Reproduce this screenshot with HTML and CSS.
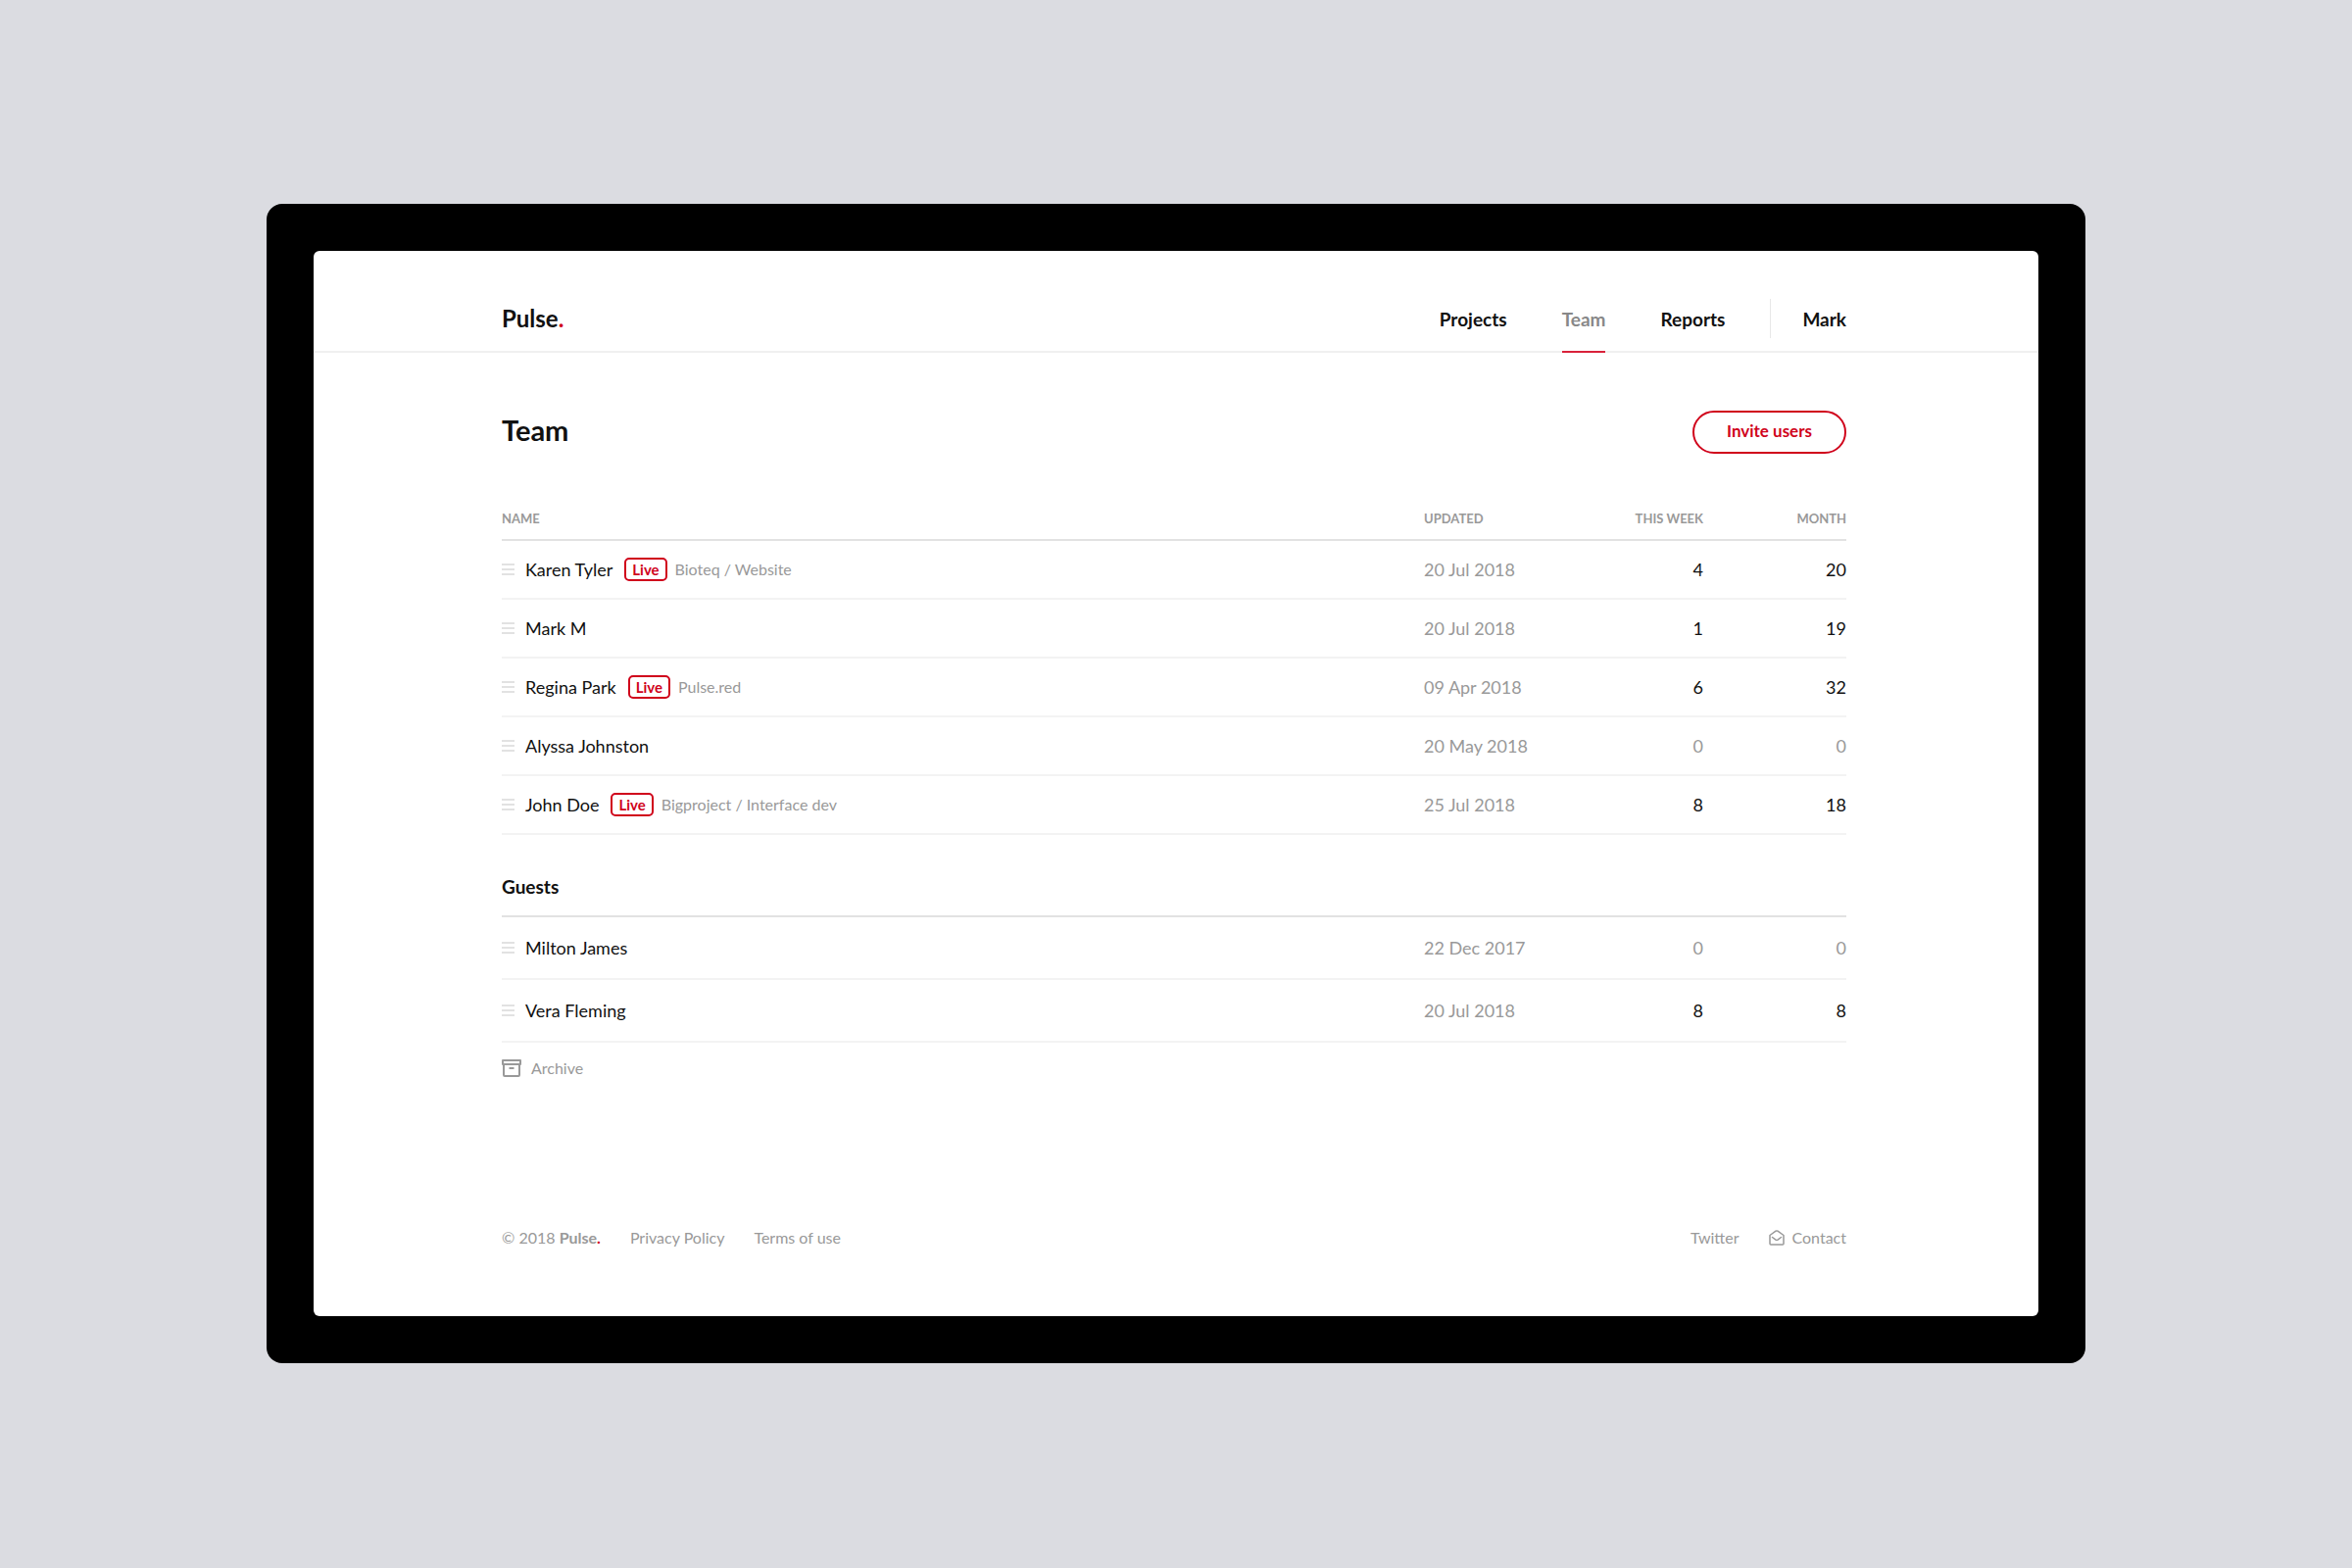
FILE: index.html
```html
<!DOCTYPE html>
<html lang="en">
<head>
  <meta charset="UTF-8">
  <title>Pulse. Team</title>
  <meta name="viewport" content="width=device-width, initial-scale=1">
  <link rel="stylesheet" href="styles.css">
</head>
<body>

<svg width="0" height="0" class="sprite" aria-hidden="true">
  <symbol id="drag" viewBox="0 0 13 12">
    <path d="M0 1h13M0 6h13M0 11h13" fill="none" stroke="currentColor" stroke-width="2"/>
  </symbol>
</svg>

<div class="device">
  <div class="screen">

    <header class="header">
      <a class="logo" href="#">Pulse<span class="dot">.</span></a>
      <nav class="nav">
        <a href="#">Projects</a>
        <a href="#" class="active">Team</a>
        <a href="#">Reports</a>
        <a href="#" class="user">Mark</a>
      </nav>
    </header>

    <main class="content">
      <div class="title-row">
        <h1>Team</h1>
        <button class="btn" type="button">Invite users</button>
      </div>

      <table class="team">
        <thead>
          <tr>
            <th scope="col">NAME</th>
            <th scope="col" class="updated">UPDATED</th>
            <th scope="col" class="week">THIS WEEK</th>
            <th scope="col" class="month">MONTH</th>
          </tr>
        </thead>
        <tbody>
          <tr>
            <td><div class="person"><button class="drag" type="button" aria-label="Move Karen Tyler"><svg><use href="#drag"/></svg></button><span class="name">Karen Tyler</span><span class="live">Live</span><span class="project">Bioteq / Website</span></div></td>
            <td class="updated">20 Jul 2018</td>
            <td class="week">4</td>
            <td class="month">20</td>
          </tr>
          <tr>
            <td><div class="person"><button class="drag" type="button" aria-label="Move Mark M"><svg><use href="#drag"/></svg></button><span class="name">Mark M</span></div></td>
            <td class="updated">20 Jul 2018</td>
            <td class="week">1</td>
            <td class="month">19</td>
          </tr>
          <tr>
            <td><div class="person"><button class="drag" type="button" aria-label="Move Regina Park"><svg><use href="#drag"/></svg></button><span class="name">Regina Park</span><span class="live">Live</span><span class="project">Pulse.red</span></div></td>
            <td class="updated">09 Apr 2018</td>
            <td class="week">6</td>
            <td class="month">32</td>
          </tr>
          <tr>
            <td><div class="person"><button class="drag" type="button" aria-label="Move Alyssa Johnston"><svg><use href="#drag"/></svg></button><span class="name">Alyssa Johnston</span></div></td>
            <td class="updated">20 May 2018</td>
            <td class="week zero">0</td>
            <td class="month zero">0</td>
          </tr>
          <tr>
            <td><div class="person"><button class="drag" type="button" aria-label="Move John Doe"><svg><use href="#drag"/></svg></button><span class="name">John Doe</span><span class="live">Live</span><span class="project">Bigproject / Interface dev</span></div></td>
            <td class="updated">25 Jul 2018</td>
            <td class="week">8</td>
            <td class="month">18</td>
          </tr>
        </tbody>
        <tbody class="guests">
          <tr>
            <th scope="rowgroup" colspan="4">Guests</th>
          </tr>
          <tr>
            <td><div class="person"><button class="drag" type="button" aria-label="Move Milton James"><svg><use href="#drag"/></svg></button><span class="name">Milton James</span></div></td>
            <td class="updated">22 Dec 2017</td>
            <td class="week zero">0</td>
            <td class="month zero">0</td>
          </tr>
          <tr>
            <td><div class="person"><button class="drag" type="button" aria-label="Move Vera Fleming"><svg><use href="#drag"/></svg></button><span class="name">Vera Fleming</span></div></td>
            <td class="updated">20 Jul 2018</td>
            <td class="week">8</td>
            <td class="month">8</td>
          </tr>
        </tbody>
      </table>

      <a class="archive" href="#">
        <svg width="20" height="18" viewBox="0 0 20 18" fill="none" stroke="currentColor" stroke-width="2" stroke-linejoin="round" aria-hidden="true">
          <path d="M1 1h18v4H1zM2 5v11q0 1 1 1h14q1 0 1-1V5M7.500 9h5"/>
        </svg>
        Archive
      </a>
    </main>

    <footer class="footer">
      <div class="links">
        <span>© 2018 <strong>Pulse<span class="dot">.</span></strong></span>
        <a href="#">Privacy Policy</a>
        <a href="#">Terms of use</a>
      </div>
      <div class="links">
        <a href="#">Twitter</a>
        <a href="#" class="contact">
          <svg width="16" height="16" viewBox="0 0 16 16" fill="none" stroke="currentColor" stroke-width="1.5" stroke-linejoin="round" stroke-linecap="round" aria-hidden="true">
            <path d="M1 5.500 7 1.200q1-.6 2 0l6 4.300V14q0 1-1 1H2q-1 0-1-1zM3.500 7.500 7 10.200q1 .6 2 0l3.500-2.700"/>
          </svg>
          Contact
        </a>
      </div>
    </footer>

  </div>
</div>

</body>
</html>
```
FILE: styles.css
```css
* {
  box-sizing: border-box;
}

body {
  margin: 0;
  padding: 208px 272px;
  background: #dbdce1;
  color: #111;
  font-family: Lato, "Noto Sans", sans-serif;
  font-size: 18px;
  line-height: 24px;
}

a {
  color: inherit;
  text-decoration: none;
}

button {
  font-family: inherit;
  cursor: pointer;
}

.sprite {
  position: absolute;
}

.dot {
  color: #d0021b;
}

.device {
  padding: 48px;
  background: #000;
  border-radius: 16px;
}

.screen {
  background: #fff;
  border-radius: 6px;
}

/* header */
.header {
  display: flex;
  justify-content: space-between;
  padding: 0 196px 0 192px;
  border-bottom: 2px solid #f0f0f0;
}

.logo {
  height: 102px;
  font-size: 24px;
  font-weight: bold;
  line-height: 137px;
}

.nav {
  display: flex;
  align-items: flex-start;
  gap: 56px;
  height: 104px;
  margin-bottom: -2px;
  font-size: 19px;
  font-weight: bold;
  line-height: 140px;
}

.nav a {
  height: 104px;
}

.nav .active {
  color: #888;
  border-bottom: 2px solid #d9223a;
}

.nav .user {
  height: 40px;
  margin: 49px 0 0 -10px;
  padding-left: 32px;
  border-left: 1px solid #e8e8e8;
  line-height: 42px;
}

/* team list */
.content {
  padding: 59px 196px 0 192px;
}

.title-row {
  display: flex;
  justify-content: space-between;
  margin-bottom: 42px;
}

h1 {
  margin: 0;
  font-size: 29px;
  line-height: 40px;
}

.btn {
  height: 44px;
  padding: 0 33px 3px;
  background: none;
  border: 2px solid #d0021b;
  border-radius: 22px;
  color: #d0021b;
  font-size: 17px;
  font-weight: bold;
}

.team {
  width: 100%;
  border-collapse: separate;
  border-spacing: 0;
}

.team th,
.team td {
  padding: 0;
  text-align: left;
}

.team thead th {
  height: 47px;
  padding-top: 3px;
  border-bottom: 2px solid #e2e2e2;
  color: #999;
  font-size: 13px;
}

.team td {
  height: 60px;
  padding-bottom: 1px;
  border-bottom: 2px solid #f3f3f3;
}

.team .updated {
  width: 145px;
  color: #999;
}

.team .week {
  width: 140px;
  text-align: right;
}

.team .month {
  width: 146px;
  text-align: right;
}

.team .zero {
  color: #999;
}

.team .guests th {
  height: 84px;
  padding-top: 24px;
  border-bottom: 2px solid #e2e2e2;
  font-size: 19px;
}

.team .guests td {
  height: 64px;
}

.person {
  display: flex;
  align-items: center;
}

.drag {
  display: flex;
  margin-right: 11px;
  padding: 0;
  background: none;
  border: none;
  color: #e2e2e2;
}

.drag svg {
  width: 13px;
  height: 12px;
}

.live {
  margin: 0 8px 0 12px;
  padding: 0 6px;
  border: 2px solid #d0021b;
  border-radius: 5px;
  color: #d0021b;
  font-size: 15px;
  font-weight: bold;
  line-height: 20px;
}

.project {
  color: #999;
  font-size: 16px;
}

.archive {
  display: flex;
  align-items: center;
  gap: 10px;
  width: fit-content;
  height: 52px;
  color: #999;
  font-size: 16px;
}

/* footer */
.footer {
  display: flex;
  justify-content: space-between;
  padding: 135px 196px 68px 192px;
  color: #999;
  font-size: 16px;
}

.links {
  display: flex;
  gap: 30px;
}

.contact {
  display: flex;
  align-items: center;
  gap: 8px;
}
```
